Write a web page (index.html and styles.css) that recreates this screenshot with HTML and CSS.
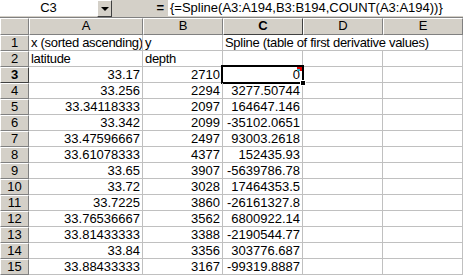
FILE: index.html
```html
<!DOCTYPE html>
<html>
	<head>
		<title>Spline</title>
		<meta charset="UTF-8">
		<link rel="stylesheet" href="styles.css">
	</head>
	<body>
		<div class="fbar">
			<div class="namebox">C3</div>
			<div class="drop"><span class="arrow"></span></div>
			<div class="eq">=</div>
			<div class="formula">{=Spline(A3:A194,B3:B194,COUNT(A3:A194))}</div>
		</div>
		<div class="sheet">
			<!-- column headers -->
			<div class="hd corner"></div>
			<div class="hd">A</div>
			<div class="hd">B</div>
			<div class="hd sel">C</div>
			<div class="hd">D</div>
			<div class="hd">E</div>
			<!-- row 1, C1 overflows over D and E -->
			<div class="rh">1</div>
			<div class="c">x (sorted ascending)</div>
			<div class="c">y</div>
			<div class="c wide">Spline (table of first derivative values)</div>
			<!-- row 2 -->
			<div class="rh">2</div>
			<div class="c">latitude</div>
			<div class="c">depth</div>
			<div class="c"></div><div class="c"></div><div class="c"></div>
			<!-- data -->
			<div class="rh sel">3</div>
			<div class="c n">33.17</div><div class="c n">2710</div>
			<div class="c n active">0<span class="mark"></span><span class="handle"></span></div>
			<div class="c"></div><div class="c"></div>
			<div class="rh">4</div>
			<div class="c n">33.256</div><div class="c n">2294</div><div class="c n">3277.50744</div>
			<div class="c"></div><div class="c"></div>
			<div class="rh">5</div>
			<div class="c n">33.34118333</div><div class="c n">2097</div><div class="c n">164647.146</div>
			<div class="c"></div><div class="c"></div>
			<div class="rh">6</div>
			<div class="c n">33.342</div><div class="c n">2099</div><div class="c n">-35102.0651</div>
			<div class="c"></div><div class="c"></div>
			<div class="rh">7</div>
			<div class="c n">33.47596667</div><div class="c n">2497</div><div class="c n">93003.2618</div>
			<div class="c"></div><div class="c"></div>
			<div class="rh">8</div>
			<div class="c n">33.61078333</div><div class="c n">4377</div><div class="c n">152435.93</div>
			<div class="c"></div><div class="c"></div>
			<div class="rh">9</div>
			<div class="c n">33.65</div><div class="c n">3907</div><div class="c n">-5639786.78</div>
			<div class="c"></div><div class="c"></div>
			<div class="rh">10</div>
			<div class="c n">33.72</div><div class="c n">3028</div><div class="c n">17464353.5</div>
			<div class="c"></div><div class="c"></div>
			<div class="rh">11</div>
			<div class="c n">33.7225</div><div class="c n">3860</div><div class="c n">-26161327.8</div>
			<div class="c"></div><div class="c"></div>
			<div class="rh">12</div>
			<div class="c n">33.76536667</div><div class="c n">3562</div><div class="c n">6800922.14</div>
			<div class="c"></div><div class="c"></div>
			<div class="rh">13</div>
			<div class="c n">33.81433333</div><div class="c n">3388</div><div class="c n">-2190544.77</div>
			<div class="c"></div><div class="c"></div>
			<div class="rh">14</div>
			<div class="c n">33.84</div><div class="c n">3356</div><div class="c n">303776.687</div>
			<div class="c"></div><div class="c"></div>
			<div class="rh">15</div>
			<div class="c n">33.88433333</div><div class="c n">3167</div><div class="c n">-99319.8887</div>
			<div class="c"></div><div class="c"></div>
		</div>
	</body>
</html>
```

FILE: styles.css
```css
/* common */
html, body {
	margin: 0; padding: 0; background-color: white; overflow: hidden;
}
* {
	font-family: "Liberation Sans", Arial, sans-serif; font-size: 13px; color: black; box-sizing: border-box;
}
/* formula bar */
.fbar {
	display: flex; height: 18px; background-color: #D4D0C8; border-bottom: 1px solid #808080;
}
.namebox {
	width: 97px; background-color: white; text-align: center; line-height: 16px; border-bottom: 1px solid #D4D0C8;
}
.drop {
	width: 15px; height: 17px; border: 1px solid; border-color: white #404040 #404040 white; display: flex; align-items: center; justify-content: center;
} .arrow {
	width: 0; height: 0; border-left: 4px solid transparent; border-right: 4px solid transparent; border-top: 4px solid black;
}
.eq {
	width: 56px; text-align: right; padding-right: 4px; font-weight: bold; line-height: 16px;
}
.formula {
	flex: 1; background-color: white; padding-left: 2px; line-height: 16px; white-space: nowrap; border-bottom: 1px solid #D4D0C8;
}
/* sheet */
.sheet {
	display: grid; grid-template-columns: 29px 114px 80px 80px 80px 80px; grid-template-rows: 17px; grid-auto-rows: 16px;
}
.hd, .rh {
	background-color: #D4D0C8; text-align: center; border: 1px solid; border-color: white #808080 #808080 white; line-height: 14px;
}
.hd.sel, .rh.sel {
	font-weight: bold; border-right-color: #404040; border-bottom-color: #404040;
}
.c {
	border-right: 1px solid #C0C0C0; border-bottom: 1px solid #C0C0C0; padding: 0 2px; line-height: 15px; white-space: nowrap; overflow: hidden; position: relative; letter-spacing: -0.3px;
} .c.n {
	text-align: right; letter-spacing: 0;
} .c.wide {
	grid-column: span 3;
}
/* active cell */
.c.active {
	overflow: visible;
} .c.active::before {
	content: ""; position: absolute; left: -2px; top: -2px; right: -2px; bottom: -2px; border: 2px solid black;
} .mark {
	position: absolute; right: 0; top: 0; width: 5px; height: 4px; background-color: #2FB4C8; border-top: 2px solid #E00000; border-right: 2px solid #E00000;
} .handle {
	position: absolute; right: -4px; bottom: -4px; width: 6px; height: 6px; background-color: black; border: 1px solid white; z-index: 1;
}
```
